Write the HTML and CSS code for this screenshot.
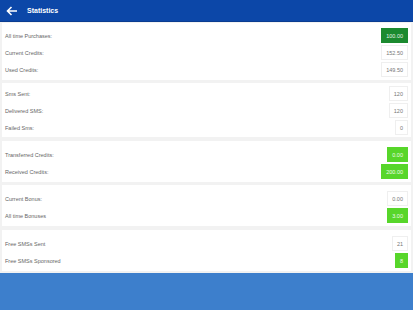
FILE: index.html
```html
<!DOCTYPE html>
<html lang="en">
<head>
    <meta charset="UTF-8">
    <meta name="viewport" content="width=device-width, initial-scale=1.0">
    <title>Statistics</title>
    <link rel="stylesheet" href="styles.css">
</head>
<body>
    <div class="header">
        <svg class="back" width="12" height="10" viewBox="0 0 12 10">
            <path d="M11 5H2M5.5 1L1.5 5l4 4" fill="none" stroke="#fff" stroke-width="1.6"/>
        </svg>
        <h1>Statistics</h1>
    </div>

    <div class="content">
        <!-- Credits -->
        <div class="card card-first">
            <div class="row"><span class="label">All time Purchases:</span><span class="value dark">100.00</span></div>
            <div class="row"><span class="label">Current Credits:</span><span class="value">152.50</span></div>
            <div class="row"><span class="label">Used Credits:</span><span class="value">149.50</span></div>
        </div>

        <!-- Sms -->
        <div class="card card-tight">
            <div class="row"><span class="label">Sms Sent:</span><span class="value">120</span></div>
            <div class="row"><span class="label">Delivered SMS:</span><span class="value">120</span></div>
            <div class="row"><span class="label">Failed Sms:</span><span class="value">0</span></div>
        </div>

        <!-- Transfers -->
        <div class="card">
            <div class="row"><span class="label">Transferred Credits:</span><span class="value green">0.00</span></div>
            <div class="row"><span class="label">Received Credits:</span><span class="value green">200.00</span></div>
        </div>

        <!-- Bonus -->
        <div class="card">
            <div class="row"><span class="label">Current Bonus:</span><span class="value">0.00</span></div>
            <div class="row"><span class="label">All time Bonuses</span><span class="value green">3.00</span></div>
        </div>

        <!-- Free sms -->
        <div class="card card-last">
            <div class="row"><span class="label">Free SMSs Sent</span><span class="value">21</span></div>
            <div class="row"><span class="label">Free SMSs Sponsored</span><span class="value green">8</span></div>
        </div>
    </div>

    <div class="footer"></div>
</body>
</html>
```

FILE: styles.css
```css
body {
    font-family: "Liberation Sans", Arial, sans-serif;
    margin: 0;
    padding: 0;
    background-color: #f2f2f2;
    width: 413px;
    height: 310px;
    overflow: hidden;
}
.header {
    background-color: #0c47a8;
    height: 22px;
    display: flex;
    align-items: center;
    padding-left: 6px;
    box-sizing: border-box;
    border-bottom: 1px solid #0a3c90;
}
.header h1 {
    margin: 0 0 0 9px;
    color: white;
    font-size: 7px;
    font-weight: bold;
}
.back {
    display: block;
}
.content {
    padding: 1px 2px 0;
    display: flex;
    flex-direction: column;
    gap: 3px;
}
.card {
    background-color: white;
    padding: 5px 3px 2px 3px;
}
.card-first {
    padding-top: 4px;
}
.card-tight {
    padding-top: 2px;
    padding-bottom: 1px;
    margin-bottom: 1px;
}
.card-last {
    margin-top: 1px;
}
.row {
    display: flex;
    align-items: center;
    justify-content: space-between;
    height: 17px;
}
.label {
    font-size: 5.5px;
    color: #666;
}
.value {
    font-size: 5.5px;
    color: #777;
    height: 15px;
    line-height: 15px;
    padding: 0 4px;
    box-sizing: border-box;
    border: 1px solid #efefef;
}
.value.dark {
    background-color: #1b8a2f;
    border-color: #1b8a2f;
    color: #e6f3e8;
}
.value.green {
    background-color: #57d62a;
    border-color: #57d62a;
    color: #f0fbea;
}
.footer {
    margin-top: 2px;
    height: 40px;
    background-color: #3d7fcc;
}
```
